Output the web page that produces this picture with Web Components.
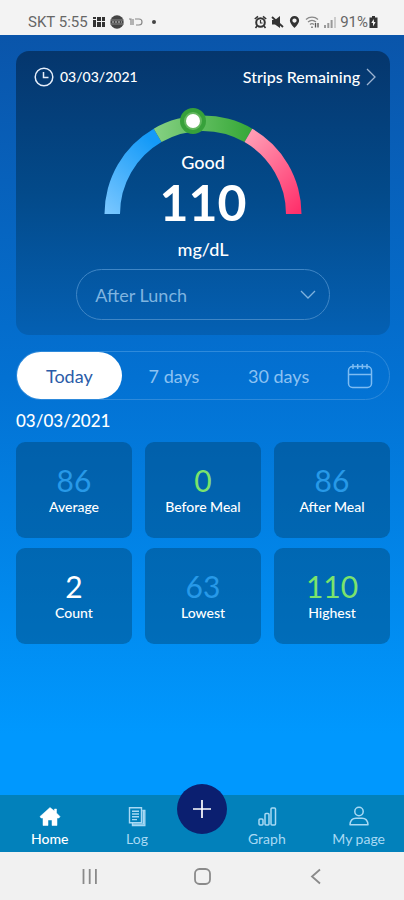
<!DOCTYPE html>
<html lang="en">
<head>
<meta charset="utf-8">
<meta name="viewport" content="width=device-width, initial-scale=1">
<title>Glucose</title>
<style>
  body {
    margin: 0;
    font-family: Lato, "Liberation Sans", sans-serif;
    color: #fff;
  }
</style>
</head>
<body>
<glucose-app></glucose-app>

<script>
// Small base class: each element renders its template into an open shadow root
class BaseElement extends HTMLElement {
  constructor() {
    super();
    this.attachShadow({ mode: 'open' });
  }

  connectedCallback() {
    this.shadowRoot.innerHTML = this.render();
  }
}

// Phone status bar
class StatusBar extends BaseElement {
  render() {
    return `
      <style>
        :host {
          display: flex;
          justify-content: space-between;
          align-items: center;
          height: 35px;
          padding: 8px 26px 0 28px;
          box-sizing: border-box;
          background: #f3f3f3;
          color: #666;
          font: 15px/20px Roboto, sans-serif;
        }
        div { display: flex; align-items: center; gap: 5px; }
        .right { gap: 4px; }
        .battery { display: flex; align-items: center; gap: 1px; }
      </style>
      <div>
        <span>SKT 5:55</span>
        <svg width="12" height="12" viewBox="0 0 12 12" fill="#333">
          <path d="M0 1h3v2H0zM0 4h3v7H0zM4 1h4v4H4zM9 1h3v4H9zM4 6h4v5H4zM9 6h3v5H9z"/>
        </svg>
        <svg width="14" height="14" viewBox="0 0 14 14">
          <circle cx="7" cy="7" r="6.7" fill="#444"/>
          <path d="M0 5h14M0 9h14" stroke="#888"/>
          <path d="M2 7h10" stroke="#ccc" stroke-dasharray="2 1"/>
        </svg>
        <svg width="14" height="10" viewBox="0 0 14 10" fill="none" stroke="#888" stroke-width="1.2">
          <path d="M0 2h2v6M4 2v6M6 2h4a3 3 0 0 1 0 6H7"/>
        </svg>
        <svg width="14" height="6" viewBox="0 0 14 6"><circle cx="6" cy="3" r="2" fill="#444"/></svg>
      </div>
      <div class="right">
        <svg width="13" height="14" viewBox="0 0 13 14" fill="none" stroke="#333" stroke-width="2">
          <circle cx="6.5" cy="7.5" r="4.3"/>
          <path d="M.8 4 4 1.3M12.2 4 9 1.3M3 11l-1.5 2M10 11l1.5 2" stroke-width="1.6"/>
          <path d="M6.5 5v3h2" stroke-width="1.2"/>
        </svg>
        <svg width="13" height="14" viewBox="0 0 13 14" fill="#333">
          <path d="M1 5h3l5-4v12L4 9.5H1z"/>
          <path d="M1 2l11 10" stroke="#333" stroke-width="1.8"/>
        </svg>
        <svg width="13" height="14" viewBox="0 0 13 14" fill="#333" fill-rule="evenodd">
          <path d="M6.5 1a4.6 4.6 0 0 0-4.600 4.600C1.900 9 6.500 13 6.500 13s4.600-4 4.600-7.400A4.600 4.600 0 0 0 6.500 1zm0 2.400a2.100 2.100 0 1 1 0 4.300 2.100 2.100 0 0 1 0-4.300z"/>
        </svg>
        <svg width="15" height="14" viewBox="0 0 15 14" fill="none" stroke="#888" stroke-width="1.3">
          <path d="M1 4.500a9 9 0 0 1 12 0M3 7a6 6 0 0 1 8 0M5 9.500a3 3 0 0 1 4 0"/>
          <path d="M10.500 8v4.500M13 8v4.500M7 11.500v1.500" stroke="#555"/>
        </svg>
        <svg width="12" height="14" viewBox="0 0 12 14" stroke-width="2" stroke="#999">
          <path d="M1 10v3M4.300 8v5M7.600 5v8"/><path d="M11 2v11" stroke="#ccc"/>
        </svg>
        <span class="battery">91%
          <svg width="9" height="12" viewBox="0 0 9 12" fill="#333" fill-rule="evenodd">
            <path d="M3 0h3v1.500h2.500V12h-8V1.500H3zM4.700 3 2.300 7H4v3.500L6.600 6H5z"/>
          </svg>
        </span>
      </div>
    `;
  }
}

// Half-circle gauge with the reading in the middle (slotted)
class GlucoseGauge extends BaseElement {
  render() {
    return `
      <style>
        :host { display: grid; justify-items: center; }
        svg, .reading { grid-area: 1 / 1; }
        .reading {
          padding-top: 43px;
          text-align: center;
          font-size: 18px;
          font-weight: 500;
          line-height: 24px;
        }
        .value { font-size: 50px; font-weight: 700; line-height: 56px; }
        .unit { line-height: 38px; }
      </style>
      <svg width="200" height="108" viewBox="0 0 200 108" aria-hidden="true">
        <defs>
          <linearGradient id="low" x1="0" y1="1" x2="0.6" y2="0">
            <stop offset="0" stop-color="#7cc8ff"/><stop offset="1" stop-color="#149af8"/>
          </linearGradient>
          <linearGradient id="good">
            <stop offset="0" stop-color="#86d183"/><stop offset="1" stop-color="#35a736"/>
          </linearGradient>
          <linearGradient id="high" x1="0.2" y1="0" x2="0.9" y2="1">
            <stop offset="0" stop-color="#ff9cb4"/><stop offset="1" stop-color="#ff306b"/>
          </linearGradient>
        </defs>
        <path d="M1.500 107A98.500 98.500 0 0 1 50.750 21.700L58.500 35.120A83 83 0 0 0 17 107z" fill="url(#low)"/>
        <path d="M50.750 21.700A98.500 98.500 0 0 1 149.250 21.700L141.500 35.120A83 83 0 0 0 58.500 35.120z" fill="url(#good)"/>
        <path d="M149.250 21.700A98.500 98.500 0 0 1 198.500 107H183A83 83 0 0 0 141.500 35.120z" fill="url(#high)"/>
        <circle cx="90" cy="14" r="13" fill="#37a13a"/>
        <circle cx="90" cy="14" r="9" fill="#63b85f"/>
        <circle cx="90" cy="14" r="7" fill="#fff"/>
      </svg>
      <div class="reading">
        <div><slot name="status"></slot></div>
        <div class="value"><slot name="value"></slot></div>
        <div class="unit"><slot name="unit"></slot></div>
      </div>
    `;
  }
}

// Main card: date, link to strips, gauge and meal selector
class ReadingCard extends BaseElement {
  render() {
    return `
      <style>
        :host {
          display: block;
          padding: 16px 14px 15px 18px;
          border-radius: 13px;
          background: linear-gradient(#05366d, #034a8a 50%, #0460b3);
        }
        header {
          display: flex;
          justify-content: space-between;
          align-items: center;
          margin-bottom: 20px;
          line-height: 20px;
        }
        time, a { display: flex; align-items: center; gap: 6px; }
        time { font-size: 14px; font-weight: 500; }
        a { color: inherit; font-size: 16px; font-weight: 500; text-decoration: none; }
        .body { padding-right: 4px; }
        .meal {
          display: grid;
          align-items: center;
          width: 75%;
          margin: 1px auto 0;
        }
        .meal > * { grid-area: 1 / 1; }
        .meal svg { justify-self: end; margin-right: 14px; pointer-events: none; }
        select {
          appearance: none;
          width: 100%;
          height: 51px;
          padding: 0 40px 0 18px;
          border: 1px solid #3f86c6;
          border-radius: 26px;
          background: transparent;
          color: #7fb4e0;
          font: 18px Lato, sans-serif;
        }
      </style>
      <header>
        <time datetime="2021-03-03">
          <svg width="20" height="20" viewBox="0 0 20 20" fill="none" stroke="#e6eefa" stroke-width="1.5">
            <circle cx="10" cy="10" r="8.8"/><path d="M9.500 5v5.500h5"/>
          </svg>
          <slot name="date"></slot>
        </time>
        <a href="#strips">
          <slot name="link"></slot>
          <svg width="10" height="18" viewBox="0 0 10 18" fill="none" stroke="#9db4d2" stroke-width="1.3">
            <path d="M1 1l8 8-8 8"/>
          </svg>
        </a>
      </header>
      <div class="body">
        <slot></slot>
        <div class="meal">
          <select aria-label="Meal">
            <option>After Lunch</option>
            <option>Before Lunch</option>
          </select>
          <svg width="16" height="10" viewBox="0 0 16 10" fill="none" stroke="#7fb2de" stroke-width="1.3">
            <path d="M1 1l7 7 7-7"/>
          </svg>
        </div>
      </div>
    `;
  }
}

// Today / 7 days / 30 days switch
class PeriodTabs extends BaseElement {
  render() {
    return `
      <style>
        :host {
          display: grid;
          grid-template-columns: 1fr 1fr 1fr 58px;
          height: 49px;
          box-sizing: border-box;
          border: 1px solid #2e8adb;
          border-radius: 25px;
        }
        button {
          display: flex;
          align-items: center;
          justify-content: center;
          padding: 0;
          border: 0;
          border-radius: 24px;
          background: transparent;
          color: #8cc2f2;
          font: 18px Lato, sans-serif;
          cursor: pointer;
        }
        button[aria-pressed="true"] { background: #fff; color: #2a5ca8; }
      </style>
      <button aria-pressed="true">Today</button>
      <button aria-pressed="false">7 days</button>
      <button aria-pressed="false">30 days</button>
      <button aria-label="Pick dates">
        <svg width="26" height="26" viewBox="0 0 26 26" fill="none" stroke="#7dbcf2" stroke-width="1.5">
          <rect x="1.500" y="3.500" width="23" height="21" rx="4"/>
          <path d="M1.500 11.500h23M6 1v5M10.700 1v5M15.400 1v5M20 1v5"/>
        </svg>
      </button>
    `;
  }

  connectedCallback() {
    super.connectedCallback();
    const tabs = this.shadowRoot.querySelectorAll('button[aria-pressed]');
    tabs.forEach(tab => tab.addEventListener('click', () => {
      tabs.forEach(t => t.setAttribute('aria-pressed', t === tab));
    }));
  }
}

// One number with its label. tone = low | good | plain
class StatTile extends BaseElement {
  render() {
    const colors = { low: '#2799e8', good: '#7be36c', plain: '#fff' };
    return `
      <style>
        :host {
          display: block;
          padding: 20px 0 22px;
          border-radius: 9px;
          background: rgba(0, 60, 100, 0.4);
          text-align: center;
        }
        .value {
          color: ${colors[this.getAttribute('tone')]};
          font-size: 30px;
          line-height: 36px;
        }
        .label { font-size: 14px; font-weight: 500; line-height: 18px; }
      </style>
      <div class="value">${this.getAttribute('value')}</div>
      <div class="label"><slot></slot></div>
    `;
  }
}

// Link in the bottom bar, icon in slot "icon"
class TabLink extends BaseElement {
  render() {
    return `
      <style>
        :host { display: block; color: #a8d9f4; }
        :host([active]) { color: #fff; }
        a {
          display: flex;
          flex-direction: column;
          align-items: center;
          gap: 2px;
          color: inherit;
          font-size: 14px;
          line-height: 18px;
          text-decoration: none;
        }
        :host([active]) a { font-weight: 500; }
      </style>
      <a href="${this.getAttribute('href')}"><slot name="icon"></slot><slot></slot></a>
    `;
  }
}

class TabBar extends BaseElement {
  render() {
    return `
      <style>
        :host { display: block; background: #0281bb; }
        nav {
          display: grid;
          grid-template-columns: 1fr 50px 1fr;
          height: 57px;
        }
        .group {
          display: flex;
          justify-content: space-between;
          padding: 11px 29px 0 31px;
        }
        .group.end { padding: 11px 19px 0 21px; }
        .add {
          display: grid;
          place-items: center;
          height: 50px;
          margin-top: -11px;
          padding: 0;
          border: 0;
          border-radius: 50%;
          background: #0b1f70;
          cursor: pointer;
        }
      </style>
      <nav>
        <div class="group">
          <tab-link href="#home" active>
            <svg slot="icon" width="22" height="22" viewBox="0 0 22 22" fill="currentColor">
              <path d="M11 1.500 1 10.500 2 12h2v7.500h5V14h4v5.500h5V12h2l1-1.500L17.500 7V3h-2v2z" stroke="currentColor" stroke-width=".5" stroke-linejoin="round"/>
            </svg>Home</tab-link>
          <tab-link href="#log">
            <svg slot="icon" width="22" height="22" viewBox="0 0 22 22" fill="none" stroke="currentColor" stroke-width="1.4">
              <path d="M3.500 1.700h12v15h-12zM16.500 4.500h2.300v15H6.500v-2"/>
              <path d="M17.300 4.500v13.600H6.500M6 5.200h7M6 8h7M6 10.800h7M6 13.600h5"/>
            </svg>Log</tab-link>
        </div>
        <button class="add" aria-label="Add reading">
          <svg width="18" height="18" viewBox="0 0 18 18" stroke="#fff" stroke-width="1.7"><path d="M9 0v18M0 9h18"/></svg>
        </button>
        <div class="group end">
          <tab-link href="#graph">
            <svg slot="icon" width="22" height="22" viewBox="0 0 22 22" fill="none" stroke="currentColor" stroke-width="1.5">
              <rect x="3" y="13" width="4" height="6" rx="1"/>
              <rect x="9" y="7.500" width="4" height="11.500" rx="1"/>
              <rect x="15" y="2" width="4.500" height="17" rx="1"/>
            </svg>Graph</tab-link>
          <tab-link href="#me">
            <svg slot="icon" width="22" height="22" viewBox="0 0 22 22" fill="none" stroke="currentColor" stroke-width="1.5">
              <circle cx="11" cy="5.500" r="4.200"/>
              <path d="M2 18.800c.3-4.800 3.200-6.600 6-6.600h6c2.800 0 5.700 1.800 6 6.600z" stroke-linejoin="round"/>
            </svg>My page</tab-link>
        </div>
      </nav>
    `;
  }
}

// Android navigation keys
class SystemNav extends BaseElement {
  render() {
    return `
      <style>
        :host {
          display: flex;
          justify-content: space-between;
          align-items: center;
          height: 48px;
          padding: 0 78px 0 80px;
          box-sizing: border-box;
          background: #f1f1f1;
        }
        button { display: flex; padding: 0; border: 0; background: none; }
        svg { fill: none; stroke: #8a8a8a; stroke-width: 1.8; }
      </style>
      <button aria-label="Recents"><svg width="20" height="20" viewBox="0 0 20 20"><path d="M3.500 3v15M9.700 3v15M15.900 3v15"/></svg></button>
      <button aria-label="Home"><svg width="20" height="20" viewBox="0 0 20 20"><rect x="2" y="3" width="15" height="15" rx="4.5"/></svg></button>
      <button aria-label="Back"><svg width="20" height="20" viewBox="0 0 20 20"><path d="M14 3.500 6 10.500l8 7"/></svg></button>
    `;
  }
}

class GlucoseApp extends BaseElement {
  render() {
    return `
      <style>
        :host { display: flex; flex-direction: column; min-height: 100vh; }
        main {
          flex: 1;
          padding: 16px 14px 16px 16px;
          background: linear-gradient(#0a55aa, #0371d2 45%, #0098fe 92%);
        }
        period-tabs { margin-top: 16px; }
        .day { margin: 11px 0; font-size: 17px; font-weight: 500; line-height: 20px; }
        .stats { display: grid; grid-template-columns: repeat(3, 1fr); gap: 10px 13px; }
      </style>
      <status-bar></status-bar>
      <main>
        <reading-card>
          <span slot="date">03/03/2021</span>
          <span slot="link">Strips Remaining</span>
          <glucose-gauge>
            <span slot="status">Good</span>
            <span slot="value">110</span>
            <span slot="unit">mg/dL</span>
          </glucose-gauge>
        </reading-card>
        <period-tabs></period-tabs>
        <div class="day">03/03/2021</div>
        <div class="stats">
          <stat-tile value="86" tone="low">Average</stat-tile>
          <stat-tile value="0" tone="good">Before Meal</stat-tile>
          <stat-tile value="86" tone="low">After Meal</stat-tile>
          <stat-tile value="2" tone="plain">Count</stat-tile>
          <stat-tile value="63" tone="low">Lowest</stat-tile>
          <stat-tile value="110" tone="good">Highest</stat-tile>
        </div>
      </main>
      <tab-bar></tab-bar>
      <system-nav></system-nav>
    `;
  }
}

customElements.define('status-bar', StatusBar);
customElements.define('glucose-gauge', GlucoseGauge);
customElements.define('reading-card', ReadingCard);
customElements.define('period-tabs', PeriodTabs);
customElements.define('stat-tile', StatTile);
customElements.define('tab-link', TabLink);
customElements.define('tab-bar', TabBar);
customElements.define('system-nav', SystemNav);
customElements.define('glucose-app', GlucoseApp);
</script>
</body>
</html>
